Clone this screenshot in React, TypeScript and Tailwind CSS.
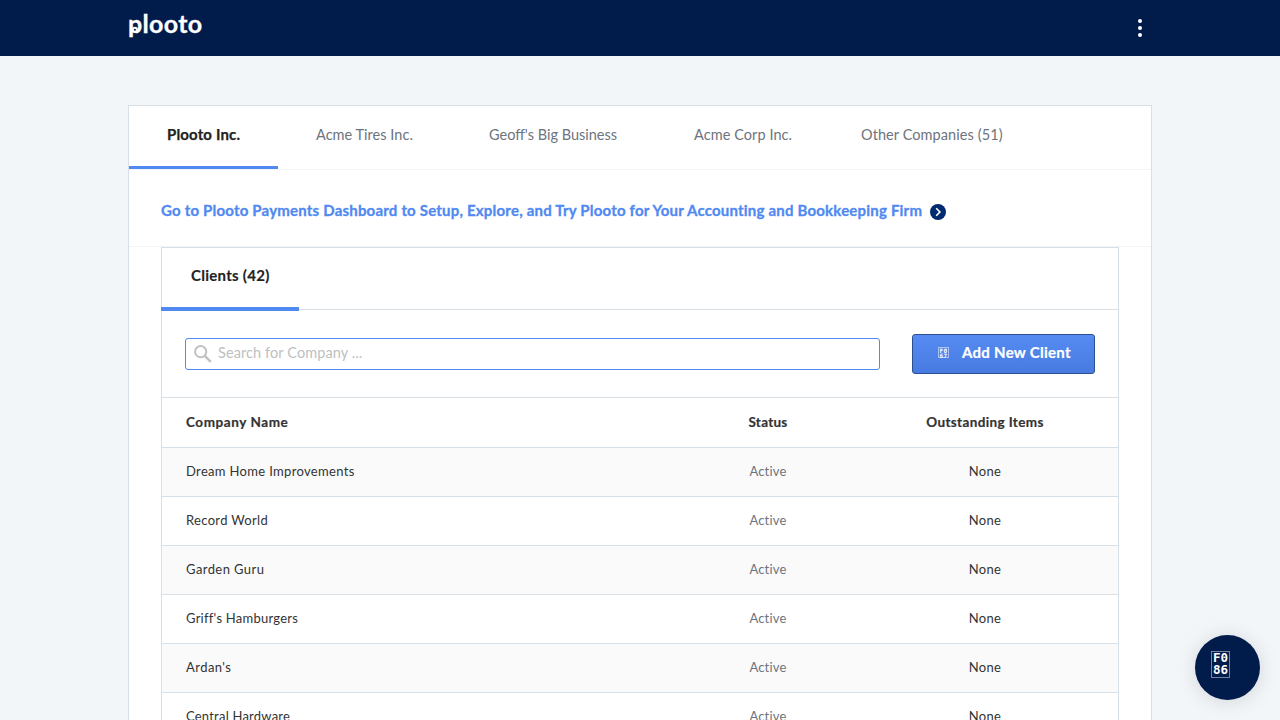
import React from "react";

type Tab = { label: string; className: string };

const tabs: Tab[] = [
  { label: "Acme Tires Inc.", className: "w-[173px] pl-[38px] tracking-[0.03px]" },
  { label: "Geoff's Big Business", className: "w-[205px] pl-[38px]" },
  { label: "Acme Corp Inc.", className: "w-[167px] pl-[38px] tracking-[0.07px]" },
  { label: "Other Companies (51)", className: "w-[220px] pl-[38px] tracking-[0.08px]" },
];

const clients = [
  { name: "Dream Home Improvements", tracking: "tracking-[0.33px]" },
  { name: "Record World", tracking: "tracking-[0.33px]" },
  { name: "Garden Guru", tracking: "tracking-[0.42px]" },
  { name: "Griff's Hamburgers", tracking: "tracking-[0.25px]" },
  { name: "Ardan's", tracking: "tracking-[0.45px]" },
  { name: "Central Hardware", tracking: "tracking-[0.22px]" },
];

function Logo() {
  return (
    <div className="relative h-[56px] w-[80px]">
      <span className="block pt-[6px] text-[25px] leading-[34px] font-bold tracking-[0.35px] text-white [-webkit-text-stroke:0.3px]">plooto</span>
      <svg className="absolute top-[26px] left-[3px]" width="8" height="8" viewBox="0 0 8 8">
        <circle cx="3.9" cy="3.8" r="2" fill="#011c4b" stroke="#fff" strokeWidth="2" />
      </svg>
    </div>
  );
}

function Header() {
  return (
    <header className="h-14 bg-[#011c4b]">
      <div className="mx-auto flex h-full w-[1024px] items-center justify-between">
        <Logo />
        <svg className="mr-[10px]" width="4" height="20" viewBox="0 0 4 20" fill="#fff">
          <circle cx="2" cy="3" r="2" />
          <circle cx="2" cy="10" r="2" />
          <circle cx="2" cy="17" r="2" />
        </svg>
      </div>
    </header>
  );
}

export default function App() {
  return (
    <div className="relative h-[720px] overflow-hidden bg-[#f2f6f9] font-['Lato','Liberation_Sans',sans-serif] text-[#333]">
      <Header />
      <main className="mx-auto mt-[49px] h-[700px] w-[1024px] border border-[#d7dfe7] bg-white">
        <nav className="flex h-16 border-b border-[#f2f4f6] text-[14.5px] leading-[58px] whitespace-nowrap text-[#6d747d]">
          <div className="h-[63px] w-[149px] border-b-[3px] border-[#5089f1] pl-[38px] text-[15px] leading-[56px] font-bold tracking-[0.15px] text-[#222] [-webkit-text-stroke:0.25px]">Plooto Inc.</div>
          {tabs.map((t) => (
            <div key={t.label} className={t.className}>{t.label}</div>
          ))}
        </nav>
        <div className="flex h-[77px] items-center border-b border-[#f2f4f6] pt-[5px] pl-8 text-[15px] font-bold whitespace-nowrap text-[#5089f1]">
          <span className="w-[769px] tracking-[0.2px] [-webkit-text-stroke:0.3px]">
            Go to Plooto Payments Dashboard to Setup, Explore, and Try Plooto for Your Accounting and Bookkeeping Firm
          </span>
          <svg className="mt-[3px]" width="16" height="16" viewBox="0 0 16 16">
            <circle cx="8" cy="8" r="8" fill="#012b70" />
            <path d="M6.2 4.3 9.9 8l-3.7 3.7" fill="none" stroke="#fff" strokeWidth="1.6" />
          </svg>
        </div>
        <section className="ml-8 w-[958px] border border-[#d7dfe7]">
          <div className="h-[62px] border-b border-[#d7dfe7]">
            <div className="-ml-px h-[63px] w-[138px] border-b-4 border-[#5089f1] pl-[30px] text-[15px] leading-[55px] font-bold tracking-[0.27px] text-[#222] [-webkit-text-stroke:0.15px]">Clients (42)</div>
          </div>
          <div className="flex h-[88px] items-center border-b border-[#d7dfe7] pl-[23px]">
            <div className="flex h-8 w-[695px] items-center rounded-[3px] border border-[#5089f1] pl-2">
              <svg width="18" height="18" viewBox="0 0 18 18" fill="none" stroke="#bfc1c3" strokeWidth="2">
                <circle cx="6.7" cy="6.7" r="5.6" />
                <path d="m10.8 10.8 6 6" strokeWidth="2.4" />
              </svg>
              <span className="pb-px pl-[6px] text-[14.5px] tracking-[0.1px] text-[#bdbfc1]">Search for Company ...</span>
            </div>
            <button className="ml-8 flex h-10 w-[183px] items-center rounded-[3px] border border-[#2c4f92] bg-linear-to-b from-[#558bf2] to-[#487be2] pb-px pl-[25px] text-[15px] font-bold whitespace-nowrap text-white">
              <span className="mr-[13px] mb-px flex h-[11px] w-[11px] flex-col items-center justify-center border border-white/50 font-['DejaVu_Sans_Mono',monospace] text-[6px] leading-[5px] tracking-[0.4px]">
                <span>F0</span>
                <span>67</span>
              </span>
              <span className="pb-[2px] tracking-[0.28px] [-webkit-text-stroke:0.2px]">Add New Client</span>
            </button>
          </div>
          <div className="flex h-[50px] items-center border-b border-[#d7dfe7] pl-6 text-[13.5px] font-bold [-webkit-text-stroke:0.2px]">
            <span className="w-[532px] tracking-[0.57px]">Company Name</span>
            <span className="w-[100px] text-center tracking-[0.25px]">Status</span>
            <span className="ml-[67px] w-[200px] text-center tracking-[0.37px]">Outstanding Items</span>
          </div>
          {clients.map((c, i) => (
            <div key={c.name} className={"flex h-[49px] items-center border-b border-[#d7dfe7] pl-6 text-[13px] " + (i % 2 === 0 ? "bg-[#fafafa]" : "bg-white")}>
              <span className={"w-[532px] " + c.tracking}>{c.name}</span>
              <span className="w-[100px] text-center tracking-[0.2px] text-[#6d747d]">Active</span>
              <span className="ml-[67px] w-[200px] text-center tracking-[0.3px]">None</span>
            </div>
          ))}
        </section>
      </main>
      <button className="absolute top-[635px] left-[1195px] h-[65px] w-[65px] rounded-full bg-[#011c4b] pb-[7px] pl-4 text-white shadow-[0_2px_20px_rgba(0,0,0,0.13)]">
        <span className="flex h-[27px] w-[19px] flex-col items-center justify-center border border-[#7683a0] font-['DejaVu_Sans_Mono',monospace] text-[12.5px] leading-[12.5px] font-bold">
          <span>F0</span>
          <span>86</span>
        </span>
      </button>
    </div>
  );
}
